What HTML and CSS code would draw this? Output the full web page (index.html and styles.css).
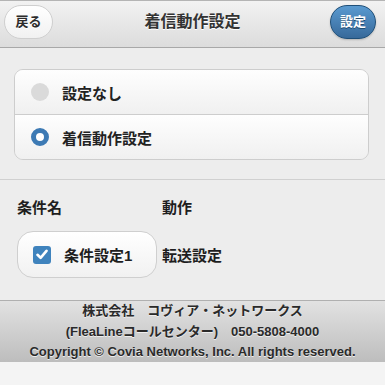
FILE: index.html
```html
<!DOCTYPE html>
<html lang="ja">
<head>
  <meta charset="UTF-8" />
  <meta name="viewport" content="width=device-width, initial-scale=1.0"/>
  <title>着信動作設定</title>
  <link rel="stylesheet" href="styles.css">
</head>
<body>

<div class="page">
  <div class="header">
    <a class="btn btn-back">戻る</a>
    <h1>着信動作設定</h1>
    <a class="btn btn-save">設定</a>
  </div>

  <div class="content">
    <div class="choices">
      <label class="choice">
        <span class="radio"></span>
        <span>設定なし</span>
      </label>
      <label class="choice">
        <span class="radio on"></span>
        <span>着信動作設定</span>
      </label>
    </div>

    <hr class="sep">

    <div class="rules">
      <div class="rules-head">
        <span class="col-name">条件名</span>
        <span>動作</span>
      </div>
      <div class="rules-row">
        <div class="col-name">
          <label class="check-btn">
            <span class="checkbox">
              <svg width="12" height="11" viewBox="0 0 12 11"><path d="M1.5 5.8 L4.6 8.8 L10.5 1.8" fill="none" stroke="#fff" stroke-width="2.6" stroke-linecap="round" stroke-linejoin="round"/></svg>
            </span>
            <span>条件設定1</span>
          </label>
        </div>
        <span>転送設定</span>
      </div>
    </div>
  </div>

  <div class="footer">
    <p>株式会社　コヴィア・ネットワークス</p>
    <p>(FleaLineコールセンター)　050-5808-4000</p>
    <p>Copyright © Covia Networks, Inc. All rights reserved.</p>
  </div>
</div>

</body>
</html>
```

FILE: styles.css
```css
body {
  margin: 0;
  font-family: 'Liberation Sans', 'Noto Sans CJK JP', sans-serif;
  background-color: #f4f4f4;
  color: #222;
}

.page {
  width: 385px;
}

/* ヘッダー */
.header {
  height: 46px;
  box-sizing: content-box;
  border-top: 1px solid #b4b4b4;
  border-bottom: 1px solid #a8a8a8;
  background: linear-gradient(#f2f2f2, #dcdcdc);
  display: flex;
  align-items: flex-start;
  justify-content: space-between;
  padding: 0 9px 0 4px;
}

.header h1 {
  margin: 3px 0 0;
  font-size: 16px;
  line-height: 36px;
  font-weight: bold;
  color: #333;
  text-shadow: 0 1px 0 #fff;
  padding-left: 2px;
}

.btn {
  margin-top: 4px;
  height: 34px;
  border-radius: 17px;
  font-size: 13px;
  font-weight: bold;
  text-align: center;
  box-sizing: border-box;
}

.btn-back {
  width: 49px;
  border: 1px solid #cfcfcf;
  background: linear-gradient(#ffffff, #f1f1f1);
  color: #2c2c2c;
  text-shadow: 0 1px 0 #fff;
  line-height: 32px;
}

.btn-save {
  width: 46px;
  border: 1px solid #1f4f78;
  background: linear-gradient(#5a9ad0, #37699a);
  color: #fff;
  text-shadow: 0 1px 0 #1d4a70;
  line-height: 32px;
  box-shadow: 0 1px 2px rgba(0,0,0,0.2);
}

/* 本文 */
.content {
  background-color: #ededed;
  padding: 21px 0 0;
}

.choices {
  margin: 0 16px 0 14px;
  border: 1px solid #cdcdcd;
  border-radius: 9px;
  overflow: hidden;
}

.choice {
  display: flex;
  align-items: center;
  height: 44px;
  padding-left: 16px;
  background: linear-gradient(#fefefe, #f0f0f0);
  font-size: 15px;
  font-weight: bold;
  color: #222;
}

.choice + .choice {
  border-top: 1px solid #cdcdcd;
}

.radio {
  width: 18px;
  height: 18px;
  border-radius: 50%;
  background: #dadada;
  margin-right: 13px;
  box-sizing: border-box;
}

.radio.on {
  background: #fff;
  border: 5px solid #3d7ab4;
}

.sep {
  margin: 19px 0 0;
  border: none;
  border-top: 1px solid #d0d0d0;
  height: 0;
}

.rules {
  padding: 16px 0 22px 17px;
  font-size: 15px;
  font-weight: bold;
  color: #1e1e1e;
}

.rules-head {
  display: flex;
  height: 24px;
  line-height: 24px;
}

.col-name {
  width: 145px;
}

.rules-row {
  display: flex;
  align-items: center;
  margin-top: 11px;
}

.check-btn {
  display: flex;
  align-items: center;
  width: 140px;
  height: 47px;
  box-sizing: border-box;
  border: 1px solid #cfcfcf;
  border-radius: 16px;
  background: linear-gradient(#ffffff, #f1f1f1);
  padding-left: 15px;
}

.checkbox {
  width: 18px;
  height: 18px;
  border-radius: 3px;
  background: #3f83bd;
  margin-right: 13px;
  display: flex;
  align-items: center;
  justify-content: center;
}

/* フッター */
.footer {
  border-top: 1px solid #b0b0b0;
  background: linear-gradient(#e2e2e2, #bdbdbd);
  text-align: center;
  height: 61px;
}

.footer p {
  margin: 0;
  font-size: 13px;
  font-weight: bold;
  line-height: 20.5px;
  color: #2a2a2a;
  text-shadow: 0 1px 0 #eee;
}
```
